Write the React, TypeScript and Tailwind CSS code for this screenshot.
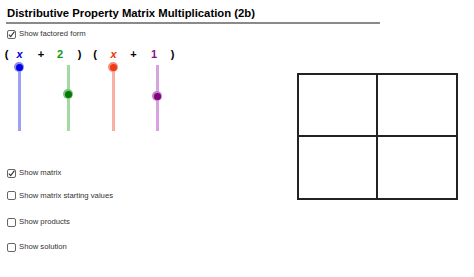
import React from "react";

const Check = ({ checked }: { checked: boolean }) => (
  <svg width="9" height="9" viewBox="0 0 9 9" className="shrink-0">
    <rect x="0.5" y="0.5" width="8" height="8" rx="1.5" fill="white" stroke="#666" strokeWidth="1" />
    {checked && <path d="M1.8 4.6 L3.7 6.6 L7.4 1.6" fill="none" stroke="#333" strokeWidth="1.1" />}
  </svg>
);

const Row = ({ checked, label, cls }: { checked: boolean; label: string; cls: string }) => (
  <div className={`flex items-center h-[10px] pl-[7px] gap-[3px] ${cls}`}>
    <Check checked={checked} />
    <span className="text-[7.7px] leading-[10px] text-[#333]">{label}</span>
  </div>
);

const Slider = ({ ml, line, knob, halo, pos }: { ml: string; line: string; knob: string; halo: string; pos: string }) => (
  <div className={`relative w-[12px] h-[66px] flex justify-center ${ml}`}>
    <div className={`w-[3px] h-full ${line}`} />
    <div className={`absolute left-[1px] w-[10px] h-[10px] rounded-full ${halo} flex items-center justify-center ${pos}`}>
      <div className={`w-[7px] h-[7px] rounded-full ${knob}`} />
    </div>
  </div>
);

export default function App() {
  return (
    <div className="w-[474px] h-[277px] bg-white overflow-hidden" style={{ fontFamily: '"Liberation Sans", Arial, sans-serif' }}>
      <div className="ml-[6px] w-[374px] h-[24px] pt-[6px] border-b-2 border-[#8a8a8a]">
        <div className="ml-[1px] text-[11.3px] leading-[14px] font-bold text-black">
          Distributive Property Matrix Multiplication (2b)
        </div>
      </div>
      <div className="flex">
        <div className="w-[290px] flex flex-col">
          <Row checked={true} label="Show factored form" cls="mt-[5px]" />
          <div className="flex h-[12px] mt-[9px] text-[11px] leading-[12px] font-bold">
            <span className="w-[13px] text-center text-black">(</span>
            <span className="w-[13px] text-center italic text-[#0000e0]">x</span>
            <span className="w-[13px] ml-[8.5px] text-center text-black">+</span>
            <span className="w-[13px] ml-[6px] text-center text-[#119911]">2</span>
            <span className="w-[13px] ml-[6.5px] text-center text-black">)</span>
            <span className="w-[13px] ml-[2.5px] text-center text-black">(</span>
            <span className="w-[13px] ml-[5.5px] text-center italic text-[#ee3300]">x</span>
            <span className="w-[13px] ml-[7px] text-center text-black">+</span>
            <span className="w-[13px] ml-[7.5px] text-center text-[#881188]">1</span>
            <span className="w-[13px] ml-[5.5px] text-center text-black">)</span>
          </div>
          <div className="flex mt-[5px]">
            <Slider ml="ml-[13px]" line="bg-[#9f9ff5]" knob="bg-[#0000e6]" halo="bg-[#8c8cf0]" pos="top-[-3px]" />
            <Slider ml="ml-[37px]" line="bg-[#a3d9a3]" knob="bg-[#007a00]" halo="bg-[#7fbf7f]" pos="top-[24px]" />
            <Slider ml="ml-[33px]" line="bg-[#f8b0a4]" knob="bg-[#f03a10]" halo="bg-[#f59080]" pos="top-[-3px]" />
            <Slider ml="ml-[32px]" line="bg-[#d8a4e0]" knob="bg-[#800080]" halo="bg-[#c080c8]" pos="top-[26px]" />
          </div>
          <Row checked={true} label="Show matrix" cls="mt-[37px]" />
          <Row checked={false} label="Show matrix starting values" cls="mt-[12.5px]" />
          <Row checked={false} label="Show products" cls="mt-[16.5px]" />
          <Row checked={false} label="Show solution" cls="mt-[15px]" />
        </div>
        <div className="ml-[7px] mt-[49px] w-[161px] h-[127px] border-2 border-[#222] grid grid-cols-2 grid-rows-2">
          <div className="border-r-2 border-b-2 border-[#222]" />
          <div className="border-b-2 border-[#222]" />
          <div className="border-r-2 border-[#222]" />
          <div />
        </div>
      </div>
    </div>
  );
}
